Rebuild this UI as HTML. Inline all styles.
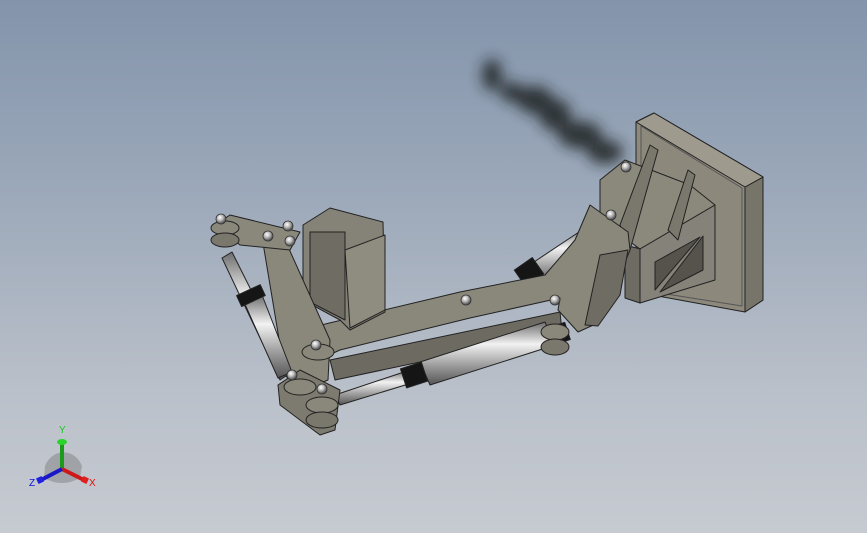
<!DOCTYPE html>
<html><head><style>
html,body{margin:0;padding:0;width:867px;height:533px;overflow:hidden}
body{background:linear-gradient(180deg,#8394ab 0%,#9ba8b9 35%,#bbc1ca 75%,#c6cad1 100%);font-family:"Liberation Sans",sans-serif}
svg{position:absolute;left:0;top:0}
</style></head><body>
<svg width="867" height="533" viewBox="0 0 867 533">
<defs>
<filter id="bl" x="-50%" y="-50%" width="200%" height="200%"><feGaussianBlur stdDeviation="7"/></filter>
<linearGradient id="cyl" x1="0" y1="0" x2="0" y2="1"><stop offset="0" stop-color="#6d6d6d"/><stop offset=".35" stop-color="#f2f2f2"/><stop offset=".7" stop-color="#9a9a9a"/><stop offset="1" stop-color="#555"/></linearGradient>
<radialGradient id="nut" cx=".4" cy=".35" r=".6"><stop offset="0" stop-color="#fff"/><stop offset=".5" stop-color="#b8b8b8"/><stop offset="1" stop-color="#555"/></radialGradient>
</defs>
<g filter="url(#bl)" fill="#1e2022" opacity=".85">
<ellipse cx="492" cy="75" rx="10" ry="16"/>
<ellipse cx="512" cy="92" rx="12" ry="10"/>
<ellipse cx="535" cy="100" rx="18" ry="14"/>
<ellipse cx="555" cy="115" rx="16" ry="16"/>
<ellipse cx="580" cy="135" rx="22" ry="14"/>
<ellipse cx="605" cy="152" rx="18" ry="12"/>
</g>
<g stroke="#222" stroke-width="1" stroke-linejoin="round">
<polygon points="636,122 654,113 763,177 763,300 745,312 636,292" fill="#8d8a7d"/>
<polygon points="745,187 763,177 763,300 745,312" fill="#77746a"/>
<polygon points="636,122 654,113 763,177 745,187" fill="#9e9b8e"/>
<polygon points="641,126 742,188 742,306 641,290" fill="#8c897c" stroke="#555"/>
<polygon points="600,180 625,160 690,185 715,205 640,249 600,220" fill="#8b887c"/>
<polygon points="640,249 715,205 715,280 640,303" fill="#85827a"/>
<polygon points="655,262 700,237 655,290" fill="#55534b"/>
<polygon points="703,236 703,270 660,292" fill="#55534b"/>
<polygon points="625,245 640,249 640,303 625,298" fill="#6d6b62"/>
<polygon points="620,225 650,145 658,150 630,250" fill="#7a776c"/>
<polygon points="668,230 688,170 695,175 678,240" fill="#7a776c"/>
<polygon points="525,268 585,228 600,248 540,285" fill="url(#cyl)"/>
<rect x="518" y="262" width="22" height="20" fill="#151515" transform="rotate(-35 529 272)"/>
<polygon points="330,360 560,312 562,332 335,380" fill="#6c6a61"/>
<polygon points="590,205 628,232 630,250 600,322 578,332 558,310 560,298 470,318 340,350 318,360 302,345 300,330 460,292 545,275 575,240" fill="#8a877b"/>
<polygon points="600,255 628,250 620,295 598,326 585,325" fill="#6f6d63"/>
<polygon points="303,225 330,208 383,222 385,312 350,330 340,320 303,300" fill="#858277"/>
<polygon points="310,232 345,232 345,320 310,302" fill="#6e6c63"/>
<polygon points="345,250 385,235 385,310 350,328" fill="#8f8c80"/>
<polygon points="262,237 285,240 330,340 328,380 300,392 285,375" fill="#8a877b"/>
<polygon points="215,225 230,215 300,232 290,250 240,245" fill="#8a877b"/>
<polygon points="222,258 232,252 292,372 280,380" fill="url(#cyl)"/>
<polygon points="244,302 262,295 292,372 278,378" fill="url(#cyl)"/>
<rect x="238" y="290" width="26" height="12" fill="#151515" transform="rotate(-25 250 296)"/>
<polygon points="335,395 410,370 415,382 340,405" fill="url(#cyl)"/>
<polygon points="420,362 545,322 555,345 430,385" fill="url(#cyl)"/>
<rect x="403" y="365" width="22" height="20" fill="#151515" transform="rotate(-18 414 375)"/>
<rect x="548" y="325" width="20" height="18" fill="#151515" transform="rotate(-18 558 334)"/>
<polygon points="278,385 300,370 340,390 335,430 320,435 280,405" fill="#7d7a6f"/>
<ellipse cx="300" cy="387" rx="16" ry="8" fill="#8a877b"/>
<ellipse cx="322" cy="405" rx="16" ry="8" fill="#8a877b"/>
<ellipse cx="322" cy="420" rx="16" ry="8" fill="#7a776c"/>
<ellipse cx="225" cy="228" rx="14" ry="7" fill="#8a877b"/>
<ellipse cx="225" cy="240" rx="14" ry="7" fill="#7a776c"/>
<ellipse cx="555" cy="332" rx="14" ry="8" fill="#8a877b"/>
<ellipse cx="555" cy="347" rx="14" ry="8" fill="#7a776c"/>
<ellipse cx="318" cy="352" rx="16" ry="8" fill="#8a877b"/>
</g>
<g fill="url(#nut)" stroke="#333" stroke-width=".8">
<circle cx="221" cy="219" r="5"/><circle cx="288" cy="226" r="5"/><circle cx="268" cy="236" r="5"/><circle cx="290" cy="241" r="5"/>
<circle cx="316" cy="345" r="5"/><circle cx="292" cy="375" r="5"/><circle cx="322" cy="389" r="5"/>
<circle cx="466" cy="300" r="5"/><circle cx="555" cy="300" r="5"/><circle cx="611" cy="215" r="5"/><circle cx="626" cy="167" r="5"/>
</g>
<g>
<path d="M45,466 A20,22 0 0 1 82,466 L80,478 Q62,488 44,478 Z" fill="#777" opacity=".45"/>
<line x1="62" y1="469" x2="62" y2="444" stroke="#1c9a1c" stroke-width="4"/>
<ellipse cx="62" cy="442" rx="5" ry="3" fill="#2bd42b"/>
<line x1="62" y1="469" x2="84" y2="480" stroke="#d01818" stroke-width="4"/>
<rect x="82" y="477" width="6" height="6" fill="#e02020" transform="rotate(25 85 480)"/>
<line x1="62" y1="469" x2="41" y2="480" stroke="#1818c8" stroke-width="4"/>
<rect x="37" y="477" width="6" height="6" fill="#2020e0" transform="rotate(-25 40 480)"/>
<text x="59" y="433" font-size="10" fill="#1fc41f">Y</text>
<text x="89" y="486" font-size="10" fill="#e01010">X</text>
<text x="29" y="486" font-size="10" fill="#1010e0">Z</text>
</g>
</svg>
</body></html>
